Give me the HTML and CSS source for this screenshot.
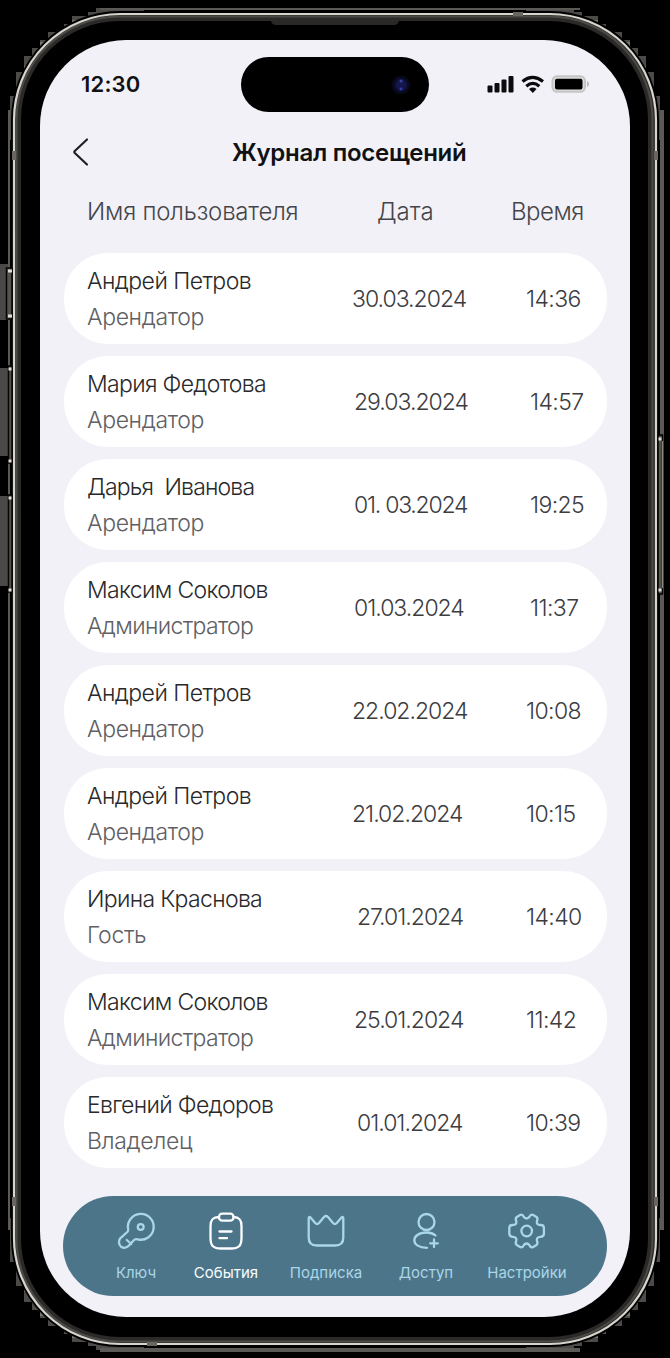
FILE: index.html
```html
<!DOCTYPE html>
<html lang="ru">
<head>
<meta charset="utf-8">
<title>Журнал посещений</title>
<link rel="stylesheet" href="styles.css">
</head>
<body>
<div class="phone">
  <svg class="bezel" viewBox="0 0 670 1358" aria-hidden="true">
    <defs>
      <g id="steps" shape-rendering="crispEdges">
        <path fill="#4c4b49" d="M144 8H96V12H88V16H72V24H64V32H48V40H40V48H32V56H24V72H16V96H10V140H60V60H144Z"/>
        <path fill="#77746f" d="M72 20h16v6H72zM56 32h10v8H56zM40 42h12v6H40zM32 56h8v8h-8zM24 66h8v8h-8z"/>
      </g>
    </defs>
    <use href="#steps"/>
    <use href="#steps" transform="translate(670 0) scale(-1 1)"/>
    <use href="#steps" transform="translate(0 1358) scale(1 -1)"/>
    <use href="#steps" transform="translate(670 1358) scale(-1 -1)"/>
    <g shape-rendering="crispEdges">
      <path fill="#4a4947" d="M0 264h8v56H0zM0 368h8v88H0zM0 496h8v90H0z"/>
      <path fill="#5c5a57" d="M8 110h2v1120H8zM100 8h480v2H100zM100 1348h480v4H100zM660 110h4v1120h-4z"/>
    </g>
    <rect x="11" y="11" width="648" height="1336" rx="109" fill="#000"/>
    <rect x="17.5" y="17.5" width="634" height="1323" rx="102" fill="#000" stroke="#2b2a28" stroke-width="7"/>
    <rect x="16.5" y="16.5" width="636" height="1325" rx="103" fill="none" stroke="#4c4a47" stroke-width="2"/>
    <rect x="14" y="14" width="642" height="1330" rx="106" fill="none" stroke="#d6d4cd" stroke-width="2.2"/>
    <path d="M271 21h128q-1 4-5 4H276q-4 0-5-4" fill="#292826"/>
    <g fill="#68665f">
      <path d="M12 151h4v9h-4zM654 151h4v9h-4zM12 1197h4v9h-4zM654 1197h4v9h-4zM513 12h10v4h-10zM147 1342h10v4h-10z"/>
    </g>
    <g fill="#55534c" stroke="#050505" stroke-width="1.5">
      <path d="M12 268H6.500V319H12zM12 366H8.500V463H12zM12 495H8.500V592H12zM658 435h4.500V594H658z"/>
    </g>
    <path d="M8 271h4M8 316h4M8.500 369h3M8.500 461h3M8.500 498h3M8.500 590h3M658.500 439h3M658.500 590h3" stroke="#dedcd5" stroke-width="3"/>
    <path d="M662.500 441v147" stroke="#8a887f"/>
  </svg>

  <main class="screen">
    <header class="status">
      <span class="clock">12:30</span>
      <div class="island"><i class="camera"></i></div>
      <svg class="indicators" viewBox="0 0 104 20" aria-hidden="true">
        <path fill="#0b0b0d" d="M.5 12.500q0-1 1-1h3q1 0 1 1v5q0 1-1 1h-3q-1 0-1-1zM7.500 10q0-1 1-1h3q1 0 1 1v7.500q0 1-1 1h-3q-1 0-1-1zM14.500 6.500q0-1 1-1h3q1 0 1 1v11q0 1-1 1h-3q-1 0-1-1zM21.500 3q0-1 1-1h3q1 0 1 1v14.500q0 1-1 1h-3q-1 0-1-1z"/>
        <g fill="none" stroke="#0b0b0d" stroke-width="3.200">
          <path d="M35.500 7.400q10-8 20.500 0"/><path d="M39.300 12.200q6.500-5.600 13 0"/>
        </g>
        <path d="M42 15q3.800-2.800 7.600 0l-3.800 4z" fill="#0b0b0d"/>
        <rect x="65.500" y="2.300" width="32.500" height="15.500" rx="4.500" fill="#dddcdd" stroke="#c6c5c6" stroke-width="2"/>
        <path d="M100 6.700q4.500 3.300 0 6.600z" fill="#bdbcbd"/>
        <rect x="68" y="4.700" width="27.500" height="10.800" rx="2" fill="#000"/>
      </svg>
    </header>

    <div class="titlebar">
      <svg class="back" viewBox="0 0 20 30" aria-hidden="true"><path d="M16 2.500 3.800 14q-1 1 0 2L16 27.500"/></svg>
      <h1 class="title">Журнал посещений</h1>
    </div>

    <div class="row heading">
      <span class="col-name">Имя пользователя</span>
      <span class="col-date">Дата</span>
      <span class="col-time">Время</span>
    </div>

    <section class="list">
      <article class="row card"><div class="who"><b class="name roomy">Андрей Петров</b><span class="role">Арендатор</span></div><span class="date">30.03.2024</span><span class="time">14:36</span></article>
      <article class="row card"><div class="who"><b class="name">Мария Федотова</b><span class="role">Арендатор</span></div><span class="date in3">29.03.2024</span><span class="time in4">14:57</span></article>
      <article class="row card"><div class="who"><b class="name tight">Дарья&nbsp; Иванова</b><span class="role">Арендатор</span></div><span class="date in3 tight">01. 03.2024</span><span class="time in4">19:25</span></article>
      <article class="row card"><div class="who"><b class="name">Максим Соколов</b><span class="role long">Администратор</span></div><span class="date in3">01.03.2024</span><span class="time in4">11:37</span></article>
      <article class="row card"><div class="who"><b class="name roomy">Андрей Петров</b><span class="role">Арендатор</span></div><span class="date">22.02.2024</span><span class="time">10:08</span></article>
      <article class="row card"><div class="who"><b class="name roomy">Андрей Петров</b><span class="role">Арендатор</span></div><span class="date">21.02.2024</span><span class="time">10:15</span></article>
      <article class="row card"><div class="who"><b class="name">Ирина Краснова</b><span class="role">Гость</span></div><span class="date in5">27.01.2024</span><span class="time">14:40</span></article>
      <article class="row card"><div class="who"><b class="name">Максим Соколов</b><span class="role long">Администратор</span></div><span class="date in3">25.01.2024</span><span class="time">11:42</span></article>
      <article class="row card"><div class="who"><b class="name">Евгений Федоров</b><span class="role">Владелец</span></div><span class="date in5">01.01.2024</span><span class="time">10:39</span></article>
    </section>

    <nav class="tabs">
      <a class="tab"><svg class="icon" viewBox="0 0 40 40"><path d="M12.200 18.500A12.900 12.900 0 1 1 21.500 28.300Q18.800 27.800 17.500 29.500L13.500 34Q9.500 38.500 5 35.800Q1.500 32 4 27.700L11.300 21Q12.600 20 12.200 18.500Z"/><circle cx="24.700" cy="16" r="2.900"/><path d="M10.800 29l4.400 4"/></svg><span>Ключ</span></a>
      <a class="tab active"><svg class="icon" viewBox="0 0 40 40"><path d="M13 6C6.500 6.200 4.500 9 4.500 15v12c0 8 3 10.500 10.500 10.500h10c7.500 0 10.500-2.500 10.500-10.500V15c0-6-2-8.800-8-9"/><rect x="13" y="2.700" width="14.500" height="7" rx="3.200"/><path d="M13.500 20.500H25.500M13.500 27.200h7.500"/></svg><span>События</span></a>
      <a class="tab"><svg class="icon" viewBox="0 0 40 40"><path d="M2.700 7.500v19q0 8 8 8h18.600q8 0 8-8v-19q0-2.500-2-.8L30.800 12q-2 2-3.800 0l-5-6q-2-2-4 0l-5 6q-1.800 2-3.800 0L4.700 6.700q-2-1.700-2 .8z"/></svg><span>Подписка</span></a>
      <a class="tab"><svg class="icon" viewBox="0 0 40 40"><circle cx="20.500" cy="11" r="8"/><path d="M29.500 24.500Q26 21.500 20.500 21.500C12.500 21.500 8.300 25.500 8.300 29.300C8.300 33.500 13 36.800 21 36.800M28 28.500v7.600M24.200 32.300h7.600"/></svg><span>Доступ</span></a>
      <a class="tab"><svg class="icon" viewBox="0 0 40 40"><path d="M13.500 3.800Q15.800 3.200 16.500 5.500Q19.500 9.500 22.700 5.500Q23.500 3.200 25.800 3.800L29.500 6Q31.200 7.300 30 10Q29 13.800 33.500 14Q36.500 13.800 36.900 16.500V23Q36.500 25.800 33.500 25.800Q29 26.300 30 30Q31.200 32.700 29.500 34L25.800 36.200Q23.500 36.800 22.700 34.500Q19.500 30.500 16.500 34.500Q15.800 36.800 13.500 36.200L9.800 34Q8 32.700 9.200 30Q10.200 26.300 5.700 25.800Q2.700 25.800 2.300 23V16.500Q2.700 13.800 5.700 14Q10.200 13.800 9.200 10Q8 7.300 9.800 6Z"/><circle cx="19.700" cy="20" r="5.300"/></svg><span>Настройки</span></a>
    </nav>
  </main>
</div>
</body>
</html>
```
FILE: styles.css
```css
* { box-sizing: border-box; }
body { margin: 0; background: #000; }

.phone {
  position: relative;
  width: 670px;
  height: 1358px;
  padding: 40px;
  background: #000;
  font-family: Inter, "Noto Sans", sans-serif;
}
.bezel { position: absolute; left: 0; top: 0; width: 670px; height: 1358px; }

.screen {
  position: relative;
  display: flex;
  flex-direction: column;
  width: 590px;
  height: 1277px;
  padding: 17px 23px 21px;
  border-radius: 86px;
  background: #f2f1f8;
  color: #333335;
}

.status {
  display: grid;
  grid-template-columns: 178px 188px 58px 104px;
  align-items: center;
  height: 55px;
}
.clock { padding-left: 18px; font-size: 22px; font-weight: 600; line-height: 53px; letter-spacing: .2px; color: #111113; }
.island {
  display: flex;
  align-items: center;
  justify-content: flex-end;
  height: 55px;
  padding-right: 18px;
  border-radius: 28px;
  background: #000;
}
.camera {
  width: 20px;
  height: 20px;
  border-radius: 50%;
  background:
    radial-gradient(circle at 10px 6px, #3a4bb0 0 .5px, transparent 2px),
    radial-gradient(circle at 10px 14px, #3442b8 0 .5px, transparent 2px),
    radial-gradient(circle, #16164e 0 4px, #0a0a24 7px, #030308 10px);
}
.indicators { grid-column: 4; width: 104px; height: 20px; margin-bottom: 1px; }

.titlebar {
  display: grid;
  grid-template-columns: 169px 1fr;
  align-items: center;
  height: 40px;
  margin-top: 20px;
}
.back { width: 20px; height: 30px; margin-left: 8px; fill: none; stroke: #202022; stroke-width: 2.200; stroke-linecap: round; }
.title { margin: 0; padding-top: 2px; font-size: 24px; font-weight: 600; line-height: 38px; letter-spacing: -.28px; color: #111113; white-space: pre; }

.row { display: grid; grid-template-columns: 264px 175px 1fr; align-items: center; white-space: nowrap; }
.heading {
  grid-template-columns: 264px 160px 1fr;
  height: 40px;
  margin-top: 19px;
  padding-left: 24px;
  font-size: 24px;
  font-weight: 300;
  letter-spacing: -.2px;
  color: #454549;
}
.col-date { padding-left: 26px; letter-spacing: 0; }
.col-time { letter-spacing: -.5px; }

.list { display: flex; flex-direction: column; gap: 12px; margin: 22px 0 0 1px; }
.card {
  height: 91px;
  padding-left: 23px;
  border-radius: 44px;
  background: #fff;
  font-size: 23px;
  font-weight: 300;
}
.who { display: flex; flex-direction: column; gap: 6px; line-height: 30px; }
.name { font-weight: 300; letter-spacing: -.67px; color: #29292b; }
.name.roomy { letter-spacing: -.55px; }
.name.tight { letter-spacing: -.83px; }
.role { font-weight: 300; letter-spacing: -.35px; color: #606064; }
.role.long { letter-spacing: -.65px; }
.date { padding-left: 1px; padding-top: 1px; letter-spacing: -1px; color: #3c3c3f; }
.date.tight { letter-spacing: -1.250px; }
.time { padding-top: 1px; letter-spacing: -.6px; color: #3c3c3f; }
.in3 { padding-left: 3px; }
.in4 { padding-left: 4px; }
.in5 { padding-left: 6px; }

.tabs {
  display: grid;
  grid-template-columns: 80px 100px 100px 100px 102px;
  height: 100px;
  width: 544px;
  margin-top: auto;
  padding: 15px 0 0 33px;
  border-radius: 50px;
  background: #4d7589;
}
.tab { display: flex; flex-direction: column; align-items: center; gap: 12px; color: #a9d6e8; font-size: 15px; line-height: 20px; }
.tab.active { color: #fafcff; }
.icon { width: 40px; height: 40px; fill: none; stroke: currentColor; stroke-width: 2.300; stroke-linecap: round; stroke-linejoin: round; }
```
